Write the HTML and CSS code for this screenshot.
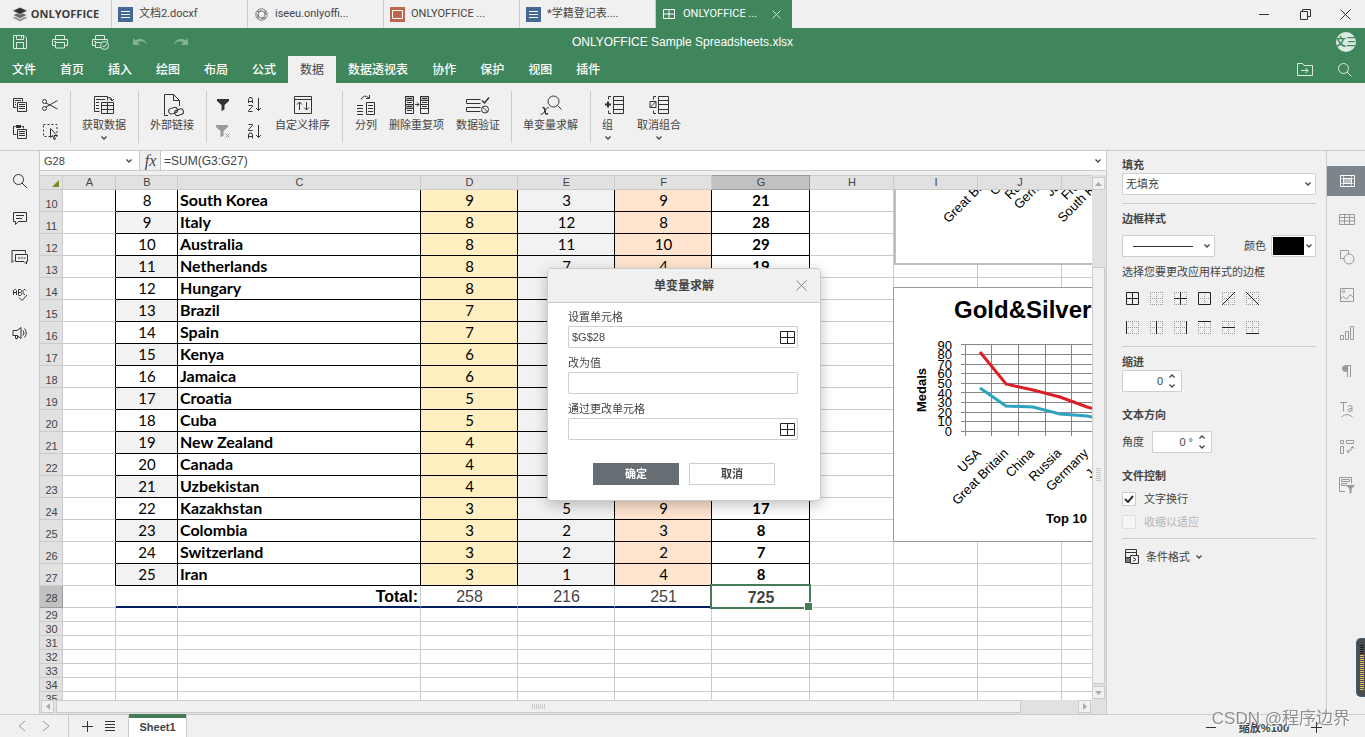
FILE: index.html
```html
<!DOCTYPE html>
<html lang="zh-CN">
<head>
<meta charset="utf-8">
<title>ONLYOFFICE Sample Spreadsheets.xlsx</title>
<link rel="stylesheet" href="styles.css">
</head>
<body>
<nav class="tabs">
  <button class="brand"><svg width="16" height="15" viewBox="0 0 16 15"><path d="M8 7.500.5 10.800 8 14.500l7.500-3.700z" fill="#999"/><path d="M8 5 .5 8 8 11.500 15.500 8z" fill="#666" stroke="#f0f0f0" stroke-width=".8"/><path d="M8 .3.5 3.700 8 7.500l7.500-3.800z" fill="#333" stroke="#f0f0f0" stroke-width=".6"/></svg><span>ONLYOFFICE</span></button>
  <button class="tab"><svg width="15" height="15"><path d="M0 0h15v15H0z" fill="#446995"/><path d="M3 4.500h9M3 7.500h9M3 10.500h9" stroke="#fff"/></svg><span>文档2.docxf</span></button>
  <button class="tab"><svg width="15" height="15" fill="none" stroke="#777"><circle cx="7.500" cy="7.500" r="5.700"/><circle cx="7.500" cy="7.500" r="3.500"/><path d="M3 4.500 7.500 4M11 3.500l.5 4.500M12 11l-4.500.5M4 11.500 3.800 7"/></svg><span>iseeu.onlyoffi...</span></button>
  <button class="tab"><svg width="15" height="15"><path d="M0 0h15v15H0z" fill="#be664f"/><path d="M2.500 3.500h10v8h-10z" fill="none" stroke="#fff"/></svg><span>ONLYOFFICE ...</span></button>
  <button class="tab"><svg width="15" height="15"><path d="M0 0h15v15H0z" fill="#446995"/><path d="M3 4.500h9M3 7.500h9M3 10.500h9" stroke="#fff"/></svg><span>*学籍登记表....</span></button>
  <button class="tab active"><svg width="15" height="15"><path d="M1.500 2.500h11v9h-11zM1.500 7h11M7 2.500v9" fill="none" stroke="#fff"/></svg><span>ONLYOFFICE ...</span><svg class="tab-close" width="9" height="9"><path d="M.5.5l8 8M8.500.5l-8 8" stroke="#cfe3d7"/></svg></button>
  <div class="window-buttons">
    <button aria-label="最小化"><svg width="11" height="11"><path d="M0 5.500h10" stroke="#333"/></svg></button>
    <button aria-label="还原"><svg width="11" height="11" fill="none" stroke="#333"><path d="M.5 2.500h7v8h-7zM2.500 2.500v-2h8v7h-3"/></svg></button>
    <button aria-label="关闭"><svg width="11" height="11"><path d="M.5.5l10 10M10.500.5l-10 10" stroke="#333"/></svg></button>
  </div>
</nav>

<header class="header">
  <div class="title-row">
    <div class="quick">
      <button aria-label="保存"><svg width="14" height="14"><path d="M.5.500h10.500l2.500 2.500v10.500H.5zM3.500.5v4h7v-4M3.500 13.500v-6h7v6M8.500 1v2"/></svg></button>
      <button aria-label="打印"><svg width="16" height="14"><path d="M3.500 4.500v-4h9v4M3.500 10.500h-3v-6h15v6h-3M3.500 7.500h9v5.500h-9zM2 6.500h2"/></svg></button>
      <button aria-label="快速打印"><svg width="17" height="15"><path d="M3.500 4.500v-4h9v4M3.500 10.500h-3v-6h15v2M3.500 12.500v-5h6M3.500 12.500h5M2 6.500h2"/><circle cx="12.500" cy="10.500" r="4"/><path d="M10.500 10.500l1.500 1.500 3-3.500"/></svg></button>
      <button aria-label="撤消" class="dim"><svg width="15" height="8"><path class="solid" d="M0 0v7h7L4.500 4.500C8 2 12 3 14 7 13 1 6-.5 2.500 2.500z"/></svg></button>
      <button aria-label="重做" class="dim"><svg width="15" height="8"><path class="solid" d="M15 0v7H8l2.500-2.500C7 2 3 3 1 7 2 1 9-.5 12.500 2.500z"/></svg></button>
    </div>
    <div class="doc-title">ONLYOFFICE Sample Spreadsheets.xlsx</div>
    <div class="title-right"><button class="avatar">文三</button></div>
  </div>
  <div class="menu-row">
    <button>文件</button><button>首页</button><button>插入</button><button>绘图</button><button>布局</button><button>公式</button><button class="active">数据</button><button>数据透视表</button><button>协作</button><button>保护</button><button>视图</button><button>插件</button>
    <div class="menu-icons">
      <button aria-label="打开文件位置"><svg width="16" height="13"><path d="M.5.5h5l1.500 2h8.500v10H.5zM4 7.500h7M8.500 5l2.500 2.500L8.500 10"/></svg></button>
      <button aria-label="搜索"><svg width="14" height="14"><circle cx="5.500" cy="5.500" r="5"/><path d="M9 9l4.500 4.500"/></svg></button>
    </div>
  </div>
</header>

<div class="toolbar">
  <div class="group small-grid first">
    <button aria-label="复制"><svg width="15" height="14"><path d="M3.500 9.500h-3v-9h9v3M2 2.500h6M2 4.500h1M2 6.500h1"/><path d="M4.500 4.500h9v9h-9zM6 6.500h6M6 8.500h6M6 10.500h6"/></svg></button>
    <button aria-label="剪切"><svg width="16" height="12"><circle cx="2.500" cy="2.500" r="2"/><circle cx="2.500" cy="9.500" r="2"/><path d="M4 4l11.500 6M4 8l11.500-6.500"/></svg></button>
    <button aria-label="粘贴"><svg width="15" height="15"><path d="M3.500 10.500h-3v-8h2M8.500 2.500h2v2"/><path class="solid" d="M3 1h5v3H3z"/><path d="M4.500 5.500h9v9h-9zM6 7.500h6M6 9.500h6M6 11.500h6"/></svg></button>
    <button aria-label="全选"><svg width="15" height="16"><path d="M.5.500h13.500v12H.5z" stroke-dasharray="2 2"/><path d="M7.500 4.500v9l2-2 1.500 4 1.500-.5-1.500-3.500h3z" fill="#f0f0f0"/></svg></button>
  </div>
  <div class="group">
    <button class="big"><svg width="20" height="18"><path d="M5.500 15.500h-5v-15h13v4M2 3.500h9M2 6.500h3M2 9.500h3M2 12.500h3M7.500 6.500h12v11h-12zM7.500 9.500h12M7.500 13.500h12M13.500 6.500v11M14 1.500q4-.5 4 3M16 3l2 2 2-2"/></svg><span>获取数据</span><i></i></button>
  </div>
  <div class="group">
    <button class="big"><svg class="nudge" width="20" height="22"><path d="M4 21.500H.5V.5h9l6 6V12M9.500.500v6h6"/><rect x="4.700" y="14" width="9" height="5.500" rx="2.700" transform="rotate(-18 9 17)"/><rect x="10.500" y="15.500" width="9" height="5.500" rx="2.700" transform="rotate(-18 15 18)"/></svg><span>外部链接</span></button>
  </div>
  <div class="group filters">
    <div class="small-grid wide">
      <button aria-label="筛选"><svg width="12" height="12"><path class="solid" d="M0 0h12v2L7.500 6v4.500L4.500 12V6L0 2z"/></svg></button>
      <button aria-label="升序"><svg width="14" height="15"><path d="M.5 6V2.500l1-2h2l1 2V6M.5 4.500h4M.5 8.500h4v1l-4 4v1h4M10.500 1v12.500M8 11l2.500 2.500L13 11"/></svg></button>
      <button aria-label="清除筛选" class="off"><svg width="14" height="13"><path class="solid" d="M0 0h12v2L7.500 6v5L4.500 12V6L0 2z"/><path d="M9.500 8.500l4 4M13.500 8.500l-4 4"/></svg></button>
      <button aria-label="降序"><svg width="14" height="15"><path d="M.5.500h4v1l-4 4v1h4M.5 14.500V11l1-2h2l1 2v3.500M.5 12.500h4M10.500 1v12.500M8 11l2.500 2.500L13 11"/></svg></button>
    </div>
    <button class="big"><svg width="18" height="18"><path d="M.5.500h17v17H.5zM.5 3.500h17M5.500 14V6M3 8.500L5.500 6 8 8.500M12.500 6v8M10 11.500l2.500 2.500 2.500-2.500"/></svg><span>自定义排序</span></button>
  </div>
  <div class="group spread">
    <button class="big"><svg width="18" height="20"><path d="M0 10.500h6M0 13.500h6M0 16.500h6M0 19.500h6M9.500 7.500h8v12h-8zM11 10.500h5M11 13.500h5M11 16.500h5M4 4.500Q7-1.500 12 3M12.500 0v3.500H9"/></svg><span>分列</span></button>
    <button class="big"><svg width="24" height="18"><path d="M.5.500h8v4h-8zM.5 8.500h8v4h-8zM15.500.500h8v4h-8z" fill="#b5b5b5"/><path d="M.5.500h8v17h-8zM15.500.500h8v17h-8zM2 2.500h5M2 6.500h5M2 10.500h5M2 14.500h5M17 2.500h5M17 6.500h5M17 10.500h5M.5 8.500h8M.5 12.500h8M15.500 8.500h8M15.500 12.500h8M10 8.500h4M12 6.500l2 2-2 2"/></svg><span>删除重复项</span></button>
    <button class="big"><svg width="24" height="17"><path d="M14.500 2.500H.5v4h14M14.500 10.500H.5v4h14"/><path d="M16 3.500l2.500 2.500 4.500-5.500" stroke-width="1.500"/><circle cx="19" cy="12.500" r="3.500"/><path d="M16.500 10l5 5"/></svg><span>数据验证</span></button>
  </div>
  <div class="group">
    <button class="big"><svg width="22" height="21"><circle cx="13.500" cy="6.500" r="5.500"/><path d="M17.500 10.500l4 4"/><path d="M.5 19q1.500 1 3-1l3-4.500q1-1.500 2.500-.5" stroke-width="1"/><path d="M2.500 13q1.500-1 2 .5l1 4.500q.5 2 2.500.5" stroke-width="1.500"/></svg><span>单变量求解</span></button>
  </div>
  <div class="group last">
    <button class="big start"><svg width="22" height="18"><path d="M11.500.5h10v17h-10zM11.500 4.500h10M11.500 8.500h10M11.500 13.500h10M9 .500H6.500v3M9 17.500H6.500v-3"/><path d="M3 8.500h6M6 5.500v6" stroke-width="2"/></svg><span>组</span><i></i></button>
    <button class="big"><svg width="20" height="18"><path d="M9.500.5h10v17h-10zM9.500 4.500h10M9.500 8.500h10M9.500 13.500h10M7 .500H4.500v3M7 17.500H4.500v-3M1 5.500h6v6H1zM1 11.500l6-6"/></svg><span>取消组合</span><i></i></button>
  </div>
</div>

<main class="workspace">
  <aside class="left-bar">
    <button aria-label="搜索"><svg width="16" height="16"><circle cx="6.500" cy="6.500" r="5"/><path d="M10 10l5 5"/></svg></button>
    <button aria-label="批注"><svg width="16" height="14"><path d="M1.500.500h13v9h-8l-3 3v-3h-2zM4 3.500h8M4 6.500h6"/></svg></button>
    <button aria-label="聊天"><svg width="17" height="15"><path d="M3 10.500l-2 2V.500h13.500v3M4.500 4.500h12v7h-1v2.500l-2.500-2.500h-8.500zM7 8h2M9.700 8h2M12.500 8h2"/></svg></button>
    <button aria-label="拼写检查"><svg width="16" height="14"><path d="M1.500 7V2.500l1-1h1l1 1V7M1.500 4.500h3M6.500 7V1.500h2l1 1v1l-1 1h-2 2l1 1v1l-1 1h-2M14 2.500l-1-1h-1l-1 1v3l1 1h1M7 9.500l3 3 5-5.500"/></svg></button>
    <button aria-label="反馈和支持"><svg width="16" height="14"><path d="M1 4.500h4l4-3v11l-4-3H1zM3.500 9.500v3h2v-3M11 4.500q2 2.500 0 5M12.500 2.500q3.500 4.500 0 9"/></svg></button>
  </aside>

  <section class="editor">
    <div class="formula-bar">
      <div class="name-box"><input aria-label="名称框" value="G28"><button aria-label="名称列表"><i class="chev"></i></button></div>
      <button class="fx" aria-label="插入函数">fx</button>
      <input class="formula" aria-label="公式" value="=SUM(G3:G27)">
      <button class="expand" aria-label="展开编辑栏"><i class="chev"></i></button>
    </div>
    <div class="sheet">
      <div class="canvas">
        <table class="grid">
          <colgroup><col class="w-head"><col class="w-a"><col class="w-b"><col class="w-c"><col class="w-n"><col class="w-n"><col class="w-n"><col class="w-g"><col class="w-x"><col class="w-x"><col class="w-x"><col class="w-x"></colgroup>
          <thead><tr><th class="corner"><svg width="7" height="7"><path d="M7 0v7H0z" fill="#7e8a2a"/></svg></th><th>A</th><th>B</th><th>C</th><th>D</th><th>E</th><th>F</th><th class="sel">G</th><th>H</th><th>I</th><th>J</th><th></th></tr></thead>
          <tbody class="data">
            <tr><th>10</th><td></td><td>8</td><td>South Korea</td><td>9</td><td>3</td><td>9</td><td>21</td><td></td><td></td><td></td><td></td></tr>
            <tr><th>11</th><td></td><td>9</td><td>Italy</td><td>8</td><td>12</td><td>8</td><td>28</td><td></td><td></td><td></td><td></td></tr>
            <tr><th>12</th><td></td><td>10</td><td>Australia</td><td>8</td><td>11</td><td>10</td><td>29</td><td></td><td></td><td></td><td></td></tr>
            <tr><th>13</th><td></td><td>11</td><td>Netherlands</td><td>8</td><td>7</td><td>4</td><td>19</td><td></td><td></td><td></td><td></td></tr>
            <tr><th>14</th><td></td><td>12</td><td>Hungary</td><td>8</td><td></td><td></td><td></td><td></td><td></td><td></td><td></td></tr>
            <tr><th>15</th><td></td><td>13</td><td>Brazil</td><td>7</td><td></td><td></td><td></td><td></td><td></td><td></td><td></td></tr>
            <tr><th>16</th><td></td><td>14</td><td>Spain</td><td>7</td><td></td><td></td><td></td><td></td><td></td><td></td><td></td></tr>
            <tr><th>17</th><td></td><td>15</td><td>Kenya</td><td>6</td><td></td><td></td><td></td><td></td><td></td><td></td><td></td></tr>
            <tr><th>18</th><td></td><td>16</td><td>Jamaica</td><td>6</td><td></td><td></td><td></td><td></td><td></td><td></td><td></td></tr>
            <tr><th>19</th><td></td><td>17</td><td>Croatia</td><td>5</td><td></td><td></td><td></td><td></td><td></td><td></td><td></td></tr>
            <tr><th>20</th><td></td><td>18</td><td>Cuba</td><td>5</td><td></td><td></td><td></td><td></td><td></td><td></td><td></td></tr>
            <tr><th>21</th><td></td><td>19</td><td>New Zealand</td><td>4</td><td></td><td></td><td></td><td></td><td></td><td></td><td></td></tr>
            <tr><th>22</th><td></td><td>20</td><td>Canada</td><td>4</td><td></td><td></td><td></td><td></td><td></td><td></td><td></td></tr>
            <tr><th>23</th><td></td><td>21</td><td>Uzbekistan</td><td>4</td><td></td><td></td><td></td><td></td><td></td><td></td><td></td></tr>
            <tr><th>24</th><td></td><td>22</td><td>Kazakhstan</td><td>3</td><td>5</td><td>9</td><td>17</td><td></td><td></td><td></td><td></td></tr>
            <tr><th>25</th><td></td><td>23</td><td>Colombia</td><td>3</td><td>2</td><td>3</td><td>8</td><td></td><td></td><td></td><td></td></tr>
            <tr><th>26</th><td></td><td>24</td><td>Switzerland</td><td>3</td><td>2</td><td>2</td><td>7</td><td></td><td></td><td></td><td></td></tr>
            <tr><th>27</th><td></td><td>25</td><td>Iran</td><td>3</td><td>1</td><td>4</td><td>8</td><td></td><td></td><td></td><td></td></tr>
          </tbody>
          <tbody class="total">
            <tr><th class="sel">28</th><td></td><td></td><td>Total:</td><td>258</td><td>216</td><td>251</td><td class="current">725</td><td></td><td></td><td></td><td></td></tr>
          </tbody>
          <tbody class="blank">
            <tr><th>29</th><td></td><td></td><td></td><td></td><td></td><td></td><td></td><td></td><td></td><td></td><td></td></tr>
            <tr><th>30</th><td></td><td></td><td></td><td></td><td></td><td></td><td></td><td></td><td></td><td></td><td></td></tr>
            <tr><th>31</th><td></td><td></td><td></td><td></td><td></td><td></td><td></td><td></td><td></td><td></td><td></td></tr>
            <tr><th>32</th><td></td><td></td><td></td><td></td><td></td><td></td><td></td><td></td><td></td><td></td><td></td></tr>
            <tr><th>33</th><td></td><td></td><td></td><td></td><td></td><td></td><td></td><td></td><td></td><td></td><td></td></tr>
            <tr><th>34</th><td></td><td></td><td></td><td></td><td></td><td></td><td></td><td></td><td></td><td></td><td></td></tr>
            <tr><th>35</th><td></td><td></td><td></td><td></td><td></td><td></td><td></td><td></td><td></td><td></td><td></td></tr>
          </tbody>
        </table>
        <svg class="charts" role="img" aria-label="Gold&amp;Silver">
          <g transform="translate(-40 -190)">
            <path d="M895 180h400v84H895z" fill="#fff" stroke="#bfbfbf" stroke-width="2"/>
            <g class="axis" text-anchor="end">
              <text transform="translate(1000 172) rotate(-45)">Great Britain</text>
              <text transform="translate(1019 172) rotate(-45)">China</text>
              <text transform="translate(1038 172) rotate(-45)">Russia</text>
              <text transform="translate(1057 172) rotate(-45)">Germany</text>
              <text transform="translate(1076 172) rotate(-45)">Japan</text>
              <text transform="translate(1095 172) rotate(-45)">France</text>
              <text transform="translate(1114 172) rotate(-45)">South Korea</text>
            </g>
            <path d="M893.500 287.500h400v254h-400z" fill="#fff" stroke="#999"/>
            <text class="chart-title" x="954" y="318">Gold&amp;Silver</text>
            <path d="M961 344.500h200M961 354.500h200M961 364.500h200M961 373.500h200M961 383.500h200M961 392.500h200M961 402.500h200M961 412.500h200M961 421.500h200M961 431.500h200M965.500 344v92M991.500 344v92M1018.500 344v92M1045.500 344v92M1071.500 344v92" stroke="#868686" fill="none"/>
            <path d="M980 352l26 32 27 6 27 7 27 10 20 5" fill="none" stroke="#dc1f26" stroke-width="3"/>
            <path d="M980 388l26 18 27 1 27 7 27 2 20 4" fill="none" stroke="#2ea3bf" stroke-width="3"/>
            <g class="axis" text-anchor="end">
              <text x="952" y="350">90</text><text x="952" y="359">80</text><text x="952" y="369">70</text><text x="952" y="378">60</text><text x="952" y="388">50</text><text x="952" y="398">40</text><text x="952" y="407">30</text><text x="952" y="417">20</text><text x="952" y="426">10</text><text x="952" y="436">0</text>
              <text transform="translate(982 454) rotate(-45)">USA</text>
              <text transform="translate(1009 454) rotate(-45)">Great Britain</text>
              <text transform="translate(1035 454) rotate(-45)">China</text>
              <text transform="translate(1062 454) rotate(-45)">Russia</text>
              <text transform="translate(1089 454) rotate(-45)">Germany</text>
              <text transform="translate(1116 454) rotate(-45)">Japan</text>
            </g>
            <text class="axis-title" text-anchor="middle" transform="translate(926 390) rotate(-90)">Medals</text>
            <text class="axis-title" x="1046" y="523">Top 10</text>
          </g>
        </svg>
      </div>
      <div class="vscroll"><button aria-label="向上"><svg width="7" height="4"><path d="M0 4l3.500-4L7 4z"/></svg></button><span class="v-before"></span><span class="v-thumb"></span><button aria-label="向下"><svg width="7" height="4"><path d="M0 0h7L3.500 4z"/></svg></button></div>
      <div class="hscroll"><button aria-label="向左"><svg width="4" height="7"><path d="M4 0v7L0 3.500z"/></svg></button><span class="h-thumb"></span><span class="h-after"></span><button aria-label="向右"><svg width="4" height="7"><path d="M0 0v7l4-3.500z"/></svg></button></div>
      <div class="scroll-corner"></div>
    </div>
  </section>

  <aside class="panel">
    <label class="heading" for="fill">填充</label>
    <select id="fill"><option>无填充</option></select>
    <hr>
    <div class="heading">边框样式</div>
    <div class="row border-row">
      <select class="line-select" aria-label="边框线型"><option></option></select>
      <span class="color-label">颜色</span>
      <button class="color" aria-label="边框颜色"><span></span><i class="chev"></i></button>
    </div>
    <div class="hint">选择您要更改应用样式的边框</div>
    <div class="borders">
      <button aria-label="所有框线"><svg width="13" height="13"><path d="M.5.500h12v12H.5zM.5 6.500h12M6.500.5v12"/></svg></button>
      <button aria-label="无框线"><svg width="13" height="13"><path class="dot" d="M0 .500h13M0 6.500h13M0 12.500h13M.5 0v13M6.500 0v13M12.500 0v13"/></svg></button>
      <button aria-label="内部框线"><svg width="13" height="13"><path class="dot" d="M0 .500h13M0 12.500h13M.5 0v13M12.500 0v13"/><path d="M0 6.500h13M6.500 0v13"/></svg></button>
      <button aria-label="外部框线"><svg width="13" height="13"><path class="dot" d="M0 6.500h13M6.500 0v13"/><path d="M.5.500h12v12H.5z"/></svg></button>
      <button aria-label="斜上框线"><svg width="13" height="13"><path class="dot" d="M0 .500h13M0 6.500h13M0 12.500h13M.5 0v13M6.500 0v13M12.500 0v13"/><path d="M0 13L13 0"/></svg></button>
      <button aria-label="斜下框线"><svg width="13" height="13"><path class="dot" d="M0 .500h13M0 6.500h13M0 12.500h13M.5 0v13M6.500 0v13M12.500 0v13"/><path d="M0 0l13 13"/></svg></button>
      <button aria-label="左框线"><svg width="13" height="13"><path class="dot" d="M0 .500h13M0 6.500h13M0 12.500h13M6.500 0v13M12.500 0v13"/><path d="M.5 0v13"/></svg></button>
      <button aria-label="内部竖框线"><svg width="13" height="13"><path class="dot" d="M0 .500h13M0 6.500h13M0 12.500h13M.5 0v13M12.500 0v13"/><path d="M6.500 0v13"/></svg></button>
      <button aria-label="右框线"><svg width="13" height="13"><path class="dot" d="M0 .500h13M0 6.500h13M0 12.500h13M.5 0v13M6.500 0v13"/><path d="M12.500 0v13"/></svg></button>
      <button aria-label="上框线"><svg width="13" height="13"><path class="dot" d="M0 6.500h13M0 12.500h13M.5 0v13M6.500 0v13M12.500 0v13"/><path d="M0 .500h13"/></svg></button>
      <button aria-label="内部横框线"><svg width="13" height="13"><path class="dot" d="M0 .500h13M0 12.500h13M.5 0v13M6.500 0v13M12.500 0v13"/><path d="M0 6.500h13"/></svg></button>
      <button aria-label="下框线"><svg width="13" height="13"><path class="dot" d="M0 .500h13M0 6.500h13M.5 0v13M6.500 0v13M12.500 0v13"/><path d="M0 12.500h13"/></svg></button>
    </div>
    <hr>
    <label class="heading" for="indent">缩进</label>
    <div class="spin"><input id="indent" value="0"><div><button aria-label="增加"><i class="chev up"></i></button><button aria-label="减少"><i class="chev"></i></button></div></div>
    <div class="heading spaced">文本方向</div>
    <div class="row"><label for="angle">角度</label><div class="spin"><input id="angle" value="0 °"><div><button aria-label="增加"><i class="chev up"></i></button><button aria-label="减少"><i class="chev"></i></button></div></div></div>
    <div class="heading spaced">文件控制</div>
    <label class="check"><input type="checkbox" checked><span>文字换行</span></label>
    <label class="check disabled"><input type="checkbox" disabled><span>收缩以适应</span></label>
    <hr>
    <button class="conditional"><svg width="15" height="16" fill="none" stroke="#333"><path d="M.5.500h11v13H.5zM.5 3.500h11M.5 8.500h11"/><path d="M1 9h5v4H1z" fill="#777" stroke="none"/><path d="M5.500 6.500h8v8h-8z" fill="#f0f0f0"/><path d="M8 8.500l3 2-3 2"/></svg><span>条件格式</span><i class="chev"></i></button>
  </aside>

  <aside class="right-bar">
    <button class="active" aria-label="单元格设置"><svg width="15" height="12"><path d="M.5.500h14v11H.5z"/><path d="M0 3.500h15M0 8.500h15M3.500 0v12M11.500 0v12" stroke-width=".6"/><path d="M3.500 3.500h8v5h-8z" fill="#b9bdc2"/></svg></button>
    <button aria-label="表格设置"><svg width="16" height="11"><path d="M.5.500h15v10H.5zM.5 3.500h15M.5 7h15M5.500 .5v10M10.500 .5v10"/></svg></button>
    <button aria-label="形状设置"><svg width="15" height="15"><path d="M4 8.500H.5v-8h8V4"/><circle cx="9" cy="9" r="5"/></svg></button>
    <button aria-label="图像设置"><svg width="14" height="14"><path d="M.5.500h13v13H.5zM.5 10.500l3-2 3 3 3.500-5 3.500 3"/><circle cx="3.500" cy="3.500" r="1.200"/></svg></button>
    <button aria-label="图表设置"><svg width="14" height="14"><path d="M.5 9.500h3v4h-3zM5.500 5.500h3v8h-3zM10.500.500h3v13h-3z"/></svg></button>
    <button aria-label="段落设置"><svg width="10" height="12"><path d="M4 .500h5M5.500.5V12M8.500.5V12"/><path class="solid" d="M5 0v7Q0 7 0 3.500T5 0z"/></svg></button>
    <button aria-label="文本艺术设置"><svg width="14" height="17"><path d="M0 1.500h7M3.500 1.500v9M8 5q4-1.500 4 1v4.500M12 7.500q-4 0-4 1.500 0 2.500 4 .500M1.500 16q5.500-5 11 0"/></svg></button>
    <button aria-label="数据透视表设置"><svg width="15" height="15"><path d="M.5.500h3v3h-3zM6.500.500h7v3h-7zM.5 6.500h3v7h-3zM7 11.500q5 0 5.500-5M10.500 8.500l2-2 2 2M9 9.500l-2 2 2 2"/></svg></button>
    <button aria-label="切片器设置"><svg width="16" height="17"><path d="M6 14.500H.5v-14h12v6M2.500 2.500h8v2h-8zM2.500 6.500h6M2.500 6.500v2h5"/><path class="solid" d="M7 8h9l-3.500 4v4l-2 1v-5z"/></svg></button>
  </aside>
</main>

<footer class="status">
  <div class="nav-arrows"><button aria-label="上一个"><svg width="8" height="12"><path d="M7 1L1 6l6 5" stroke="#999"/></svg></button><button aria-label="下一个"><svg width="8" height="12"><path d="M1 1l6 5-6 5" stroke="#999"/></svg></button></div>
  <button class="add" aria-label="添加工作表"><svg width="11" height="11"><path d="M0 5.500h11M5.500 0v11"/></svg></button>
  <button class="list" aria-label="工作表列表"><svg width="10" height="11"><path d="M0 .500h10M0 3.500h10M0 6.500h10M0 9.500h10"/></svg></button>
  <button class="sheet-tab">Sheet1</button>
  <div class="zoom"><button aria-label="缩小"><svg width="11" height="11"><path d="M0 5.500h10"/></svg></button><span>缩放%100</span><button aria-label="放大"><svg width="11" height="11"><path d="M0 5.500h11M5.500 0v11"/></svg></button></div>
</footer>

<section class="dialog" role="dialog" aria-labelledby="dlg-title">
  <div class="dialog-head"><h1 id="dlg-title">单变量求解</h1><button aria-label="关闭"><svg width="11" height="11"><path d="M.5.500l10 10M10.500.500l-10 10" stroke="#888"/></svg></button></div>
  <form class="dialog-body">
    <label for="set-cell">设置单元格</label>
    <div class="field"><input id="set-cell" value="$G$28"><button type="button" aria-label="选择数据"><svg width="15" height="13"><path d="M.5.500h14v12H.5zM.5 6.500h14M7.500.5v12"/></svg></button></div>
    <label for="to-value">改为值</label>
    <div class="field"><input id="to-value"></div>
    <label for="by-cell">通过更改单元格</label>
    <div class="field"><input id="by-cell"><button type="button" aria-label="选择数据"><svg width="15" height="13"><path d="M.5.500h14v12H.5zM.5 6.500h14M7.500.5v12"/></svg></button></div>
    <div class="actions"><button type="button" class="ok">确定</button><button type="button" class="cancel">取消</button></div>
  </form>
</section>

<div class="meter"><span class="dark"></span><span class="lit"></span></div>
<div class="watermark">CSDN @程序边界</div>
</body>
</html>
```
FILE: styles.css
```css
* { box-sizing: border-box; }
html, body { height: 100%; }
body {
  margin: 0;
  display: flex;
  flex-direction: column;
  overflow: hidden;
  background: #f0f0f0;
  color: #444;
  font: 11px/16px "Liberation Sans", "Noto Sans CJK SC", sans-serif;
}
button, input, select { font: inherit; color: inherit; margin: 0; padding: 0; }
button { border: 0; background: none; display: flex; align-items: center; justify-content: center; white-space: nowrap; }
input, select { border: 0; border-radius: 0; outline: 0; min-width: 0; }
svg { display: block; flex: none; overflow: visible; }

/* chevron glyph */
.chev, .big i { display: block; width: 6px; height: 4px; background: url("data:image/svg+xml,%3Csvg xmlns='http://www.w3.org/2000/svg' width='6' height='4'%3E%3Cpath d='M.5.5 3 3 5.500.5' fill='none' stroke='%23444' stroke-width='1.300'/%3E%3C/svg%3E") no-repeat; }
.chev.up { rotate: 180deg; }

/* document tabs */
.tabs { display: flex; height: 28px; flex: none; font-family: Roboto, "Noto Sans CJK SC", sans-serif; }
.brand { width: 112px; border-right: 1px solid #cbcbcb; gap: 3px; font: bold 12px/16px "Open Sans", sans-serif; color: #3c3c3c; }
.brand span { font-size: 11px; }
.tab { width: 136px; border-right: 1px solid #cbcbcb; justify-content: flex-start; padding-left: 6px; gap: 6px; }
.tab.active { background: #40865c; color: #fff; border: 0; }
.tab-close { margin-left: 9px; }
.window-buttons { margin-left: auto; display: flex; }
.window-buttons button { width: 41px; }
.window-buttons button:last-child { width: 39px; }

/* header */
.header { background: #40865c; color: #fff; flex: none; font-size: 12px; }
.header svg { fill: none; stroke: #dcebe2; }
.header .solid { fill: #dcebe2; stroke: none; }
.title-row { display: grid; grid-template-columns: 1fr auto 1fr; align-items: center; height: 28px; }
.quick { display: flex; }
.quick button { width: 40px; height: 28px; }
.quick .dim { opacity: .45; }
.doc-title { font-size: 12px; }
.title-right { display: flex; justify-content: flex-end; padding-right: 9px; }
.avatar { width: 20px; height: 20px; border-radius: 50%; background: #dcebe2; color: #40865c; overflow: hidden; font-size: 11px; font-weight: bold; }
.menu-row { display: flex; height: 27px; font-weight: 500; }
.menu-row > button { padding: 0 12px; }
.menu-row > .active { background: #f0f0f0; color: #444; font-weight: 400; }
.menu-icons { margin-left: auto; display: flex; }
.menu-icons button { width: 40px; }

/* ribbon */
.toolbar { display: flex; flex: none; height: 68px; padding-top: 8px; border-bottom: 1px solid #cbcbcb; }
.toolbar svg { fill: none; stroke: #333; }
.toolbar .solid { fill: #333; stroke: none; }
.toolbar .off { opacity: .45; }
.group { display: flex; height: 52px; padding: 0 12px 0 11px; border-right: 1px solid #cbcbcb; }
.small-grid { display: grid; grid-template-columns: 30px 30px; grid-auto-rows: 27px; }
.small-grid.wide { grid-template-columns: 32px 32px; }
.group.first { padding: 0 5px; }
.group.filters { padding: 0 12px 0 0; gap: 4px; }
.group.spread { padding: 0 11px 0 12px; gap: 12px; }
.group.last { border: 0; gap: 13px; }
.big { flex-direction: column; justify-content: flex-start; padding-top: 2px; height: 52px; }
.big svg { margin: auto 0; }
.big .nudge { margin-left: 4px; }
.big span { line-height: 16px; }
.big::after { content: ""; height: 10px; flex: none; }
.big i { margin: 3px 0 -7px; }
.big.start { align-items: flex-start; }
.big.start i { margin-left: 3px; }

/* workspace */
.workspace { display: flex; flex: 1; min-height: 0; }
.left-bar, .right-bar { display: flex; flex-direction: column; gap: 8px; padding-top: 15px; flex: none; }
.left-bar { width: 40px; border-right: 1px solid #cbcbcb; }
.right-bar { width: 39px; border-left: 1px solid #cbcbcb; }
.left-bar button, .right-bar button { height: 30px; flex: none; }
.right-bar button { padding-left: 2px; }
.left-bar svg { fill: none; stroke: #333; }
.right-bar svg { fill: none; stroke: #999; }
.right-bar .solid { fill: #999; stroke: none; }
.right-bar .active { background: #7d858c; }
.right-bar .active svg { stroke: #fff; }

.editor { flex: 1; min-width: 0; display: flex; flex-direction: column; }
.formula-bar { display: flex; height: 20px; flex: none; background: #fff; border-bottom: 1px solid #cbcbcb; }
.name-box { display: flex; width: 100px; border-right: 1px solid #cbcbcb; }
.name-box input { flex: 1; padding-left: 4px; background: none; }
.name-box button { width: 20px; }
.fx { width: 21px; background: #f0f0f0; border-right: 1px solid #cbcbcb; font: italic 16px/16px "Liberation Serif", serif; padding-left: 1px; }
.formula { flex: 1; padding-left: 3px; font-size: 12px; }
.expand { width: 17px; }
.sheet { flex: 1; min-height: 0; margin-top: 4px; display: grid; grid-template-columns: minmax(0, 1fr) 14px; grid-template-rows: minmax(0, 1fr) 14px; }
.canvas { position: relative; overflow: hidden; background: #fff; }
.charts { position: absolute; left: 0; top: 15px; width: 100%; height: calc(100% - 15px); overflow: hidden; font-family: "Liberation Sans", sans-serif; }
.axis { font-size: 13px; }
.chart-title { font-size: 24px; font-weight: bold; }
.axis-title { font-size: 13px; font-weight: bold; }

.grid { table-layout: fixed; width: 1103px; border-collapse: separate; border-spacing: 0; color: #000; }
.w-head { width: 23px; } .w-a { width: 53px; } .w-b { width: 62px; } .w-c { width: 243px; }
.w-n { width: 97px; } .w-g { width: 98px; } .w-x { width: 84px; }
.grid th, .grid td { padding: 0 0 0 1px; border: 0 solid #cbcbcb; border-width: 0 1px 1px 0; text-align: center; overflow: hidden; white-space: nowrap; }
.grid th { background: #e1e1e1; color: #444; font-weight: normal; font-size: 11px; line-height: 12px; vertical-align: bottom; }
.grid thead th { height: 15px; border-top-width: 1px; padding-bottom: 1px; }
.grid th.sel { background: #c1c1c1; border-color: #999; }
.corner svg { margin: 0 3px 1px auto; }
.data th, .data td, .total th, .total td { height: 22px; }
.data th { padding-bottom: 1px; }
.total th { padding-bottom: 3px; }
.grid .data td { padding-bottom: 2px; font: 15px/18px Lato, sans-serif; }
.data td:nth-child(n+3):nth-child(-n+8) { border-color: #000; }
.data td:nth-child(2) { border-right-color: #000; }
.grid .data td:nth-child(4) { text-align: left; padding-left: 2px; font-weight: bold; font-size: 16px; }
.data tr:nth-child(even) td:nth-child(3), .data td:nth-child(6) { background: #f2f2f2; }
.data td:nth-child(5) { background: #ffefc1; }
.data td:nth-child(7) { background: #ffe5d0; }
.grid .data td:nth-child(8) { font-weight: bold; }
.total td { font: 16px/18px "Liberation Sans", sans-serif; color: #444; }
.grid .total td { padding-top: 2px; }
.total td:nth-child(n+3):nth-child(-n+7) { border-bottom: 2px solid #002060; }
.total td:nth-child(4) { text-align: right; padding-right: 2px; font-weight: bold; color: #000; }
.grid .current { position: relative; overflow: visible; font-weight: bold; }
.current::before { content: ""; position: absolute; inset: -2px -2px -2px -2px; border: 2px solid #467c57; }
.current::after { content: ""; position: absolute; right: -4px; bottom: -4px; width: 7px; height: 7px; background: #467c57; border: 1px solid #fff; }
.blank th, .blank td { height: 14px; }

.vscroll, .hscroll { display: flex; background: #e1e1e1; gap: 2px; }
.vscroll { flex-direction: column; padding: 2px 1px 1px 0; }
.hscroll { padding: 0 1px 1px 1px; }
.vscroll button, .hscroll button { width: 13px; height: 13px; flex: none; border: 1px solid #cbcbcb; background: #f0f0f0; }
.vscroll svg, .hscroll svg { fill: #aaa; }
.v-before { flex: 73 1 0; }
.v-thumb, .h-thumb { border: 1px solid #cbcbcb; display: flex; background: #f0f0f0; align-items: center; justify-content: center; }
.v-thumb { flex: 418 1 0; }
.v-thumb::before { content: ""; width: 5px; height: 14px; background: repeating-linear-gradient(#cbcbcb 0 1px, transparent 1px 2px); }
.h-thumb { flex: 966 1 0; }
.h-thumb::before { content: ""; height: 5px; width: 14px; background: repeating-linear-gradient(90deg, #cbcbcb 0 1px, transparent 1px 2px); }
.h-after { flex: 53 1 0; }
.scroll-corner { background: #e1e1e1; }

/* settings panel */
.panel { width: 220px; flex: none; padding: 6px 10px 0 15px; border-left: 1px solid #cbcbcb; }
.heading { display: block; font-weight: bold; height: 16px; }
.panel hr { height: 1px; border: 0; background: #cbcbcb; margin: 8px 0 7px; }
.panel select, .spin, .color { height: 22px; border: 1px solid #cfcfcf; border-radius: 1px; background-color: #fff; }
.panel select { appearance: none; display: block; width: 100%; padding-left: 3px; background-image: url("data:image/svg+xml,%3Csvg xmlns='http://www.w3.org/2000/svg' width='6' height='4'%3E%3Cpath d='M.5.5 3 3 5.500.5' fill='none' stroke='%23444' stroke-width='1.300'/%3E%3C/svg%3E"); background-repeat: no-repeat; background-position: right 4px center; }
.row { display: flex; align-items: center; gap: 8px; margin-top: 8px; }
.panel .line-select { width: 93px; margin-right: auto; background-image: url("data:image/svg+xml,%3Csvg xmlns='http://www.w3.org/2000/svg' width='6' height='4'%3E%3Cpath d='M.5.5 3 3 5.500.5' fill='none' stroke='%23444' stroke-width='1.300'/%3E%3C/svg%3E"), linear-gradient(#333, #333); background-position: right 4px center, 10px 10px; background-size: auto, 60px 1px; }
.border-row { gap: 5px; }
.color { width: 45px; justify-content: flex-start; padding-left: 1px; gap: 2px; }
.color span { width: 31px; height: 18px; background: #000; }
.hint { margin-top: 7px; white-space: nowrap; }
.borders { display: grid; grid-template-columns: repeat(6, 13px); column-gap: 11px; row-gap: 16px; padding-left: 4px; margin: 12px 0; }
.borders svg { fill: none; stroke: #222; }
.borders .dot { stroke: #999; stroke-dasharray: 1 1; }
.spin { display: flex; width: 60px; }
.spin input { flex: 1; width: 30px; background: none; text-align: right; }
.spin > div { display: flex; flex-direction: column; width: 18px; justify-content: space-around; }
.spin > div button { height: 9px; }
.heading.spaced { margin-top: 15px; }
.check { display: flex; align-items: center; gap: 8px; height: 16px; margin-top: 7px; }
.check input { appearance: none; width: 14px; height: 14px; border: 1px solid #cbcbcb; border-radius: 1px; background: #fff center no-repeat; }
.check input:checked { background-image: url("data:image/svg+xml,%3Csvg xmlns='http://www.w3.org/2000/svg' width='10' height='8'%3E%3Cpath d='M1 4l3 3 5-6' fill='none' stroke='%23333' stroke-width='2'/%3E%3C/svg%3E"); }
.check.disabled { color: #b5b5b5; }
.check.disabled input { background-color: #f5f5f5; border-color: #dfdfdf; }
.conditional { margin-top: 10px; padding-left: 3px; gap: 6px; height: 16px; }

/* status bar */
.status { display: flex; flex: none; height: 23px; border-top: 1px solid #cbcbcb; }
.status svg { fill: none; stroke: #333; }
.nav-arrows { display: flex; width: 69px; padding-left: 18px; gap: 16px; border-right: 1px solid #cbcbcb; }
.add { width: 37px; }
.list { width: 8px; }
.sheet-tab { width: 59px; margin: -1px 0 0 14px; background: #fff; border: 1px solid #cbcbcb; border-width: 0 1px; box-shadow: inset 0 4px #467c57; padding-top: 3px; font-weight: bold; }
.zoom { display: flex; margin-left: auto; gap: 22px; padding: 3px 43px 0 0; font-weight: bold; align-items: center; }

/* goal seek dialog */
.dialog { position: fixed; left: 3px; right: 0; top: 268px; width: 274px; margin: 0 auto; background: #fff; border: 1px solid #cbcbcb; border-radius: 4px; box-shadow: 0 4px 14px rgba(0, 0, 0, .25); overflow: hidden; }
.dialog-head { display: flex; align-items: center; height: 34px; padding-left: 37px; background: #f0f0f0; border-bottom: 1px solid #cbcbcb; }
.dialog-head h1 { flex: 1; margin: 0; font-size: 12px; text-align: center; }
.dialog-head button { width: 37px; height: 33px; }
.dialog-body { padding: 6px 22px 15px 20px; }
.dialog-body label { display: block; height: 16px; margin: 0 0 1px; }
.field { display: flex; height: 22px; margin-bottom: 7px; border: 1px solid #cfcfcf; border-radius: 1px; }
.field input { flex: 1; padding-left: 3px; background: none; }
.field button { width: 20px; }
.field svg { fill: none; stroke: #222; }
.actions { display: flex; justify-content: center; gap: 10px; margin-top: 23px; padding-left: 2px; }
.actions button { width: 86px; height: 22px; border: 1px solid #cfcfcf; font-weight: bold; background: #fff; }
.actions .ok { background: #666d73; border-color: #666d73; color: #fff; }

/* floating overlays */
.meter { position: fixed; right: 0; top: 638px; width: 9px; height: 59px; border: 1px solid #3f5f73; border-right: 0; border-radius: 5px 0 0 5px; background: #4a4d52; padding: 6px 1px 6px 3px; }
.meter span { display: block; }
.meter .dark { height: 10px; background: repeating-linear-gradient(#222 0 1px, transparent 1px 2px); }
.meter .lit { height: 36px; background: repeating-linear-gradient(#e8c25a 0 1px, transparent 1px 2px); }
.watermark { position: fixed; right: 15px; bottom: 7px; font: 17px/22px "Liberation Sans", "Noto Sans CJK SC", sans-serif; color: #909090; text-shadow: 1px 1px #fff; pointer-events: none; }
```
